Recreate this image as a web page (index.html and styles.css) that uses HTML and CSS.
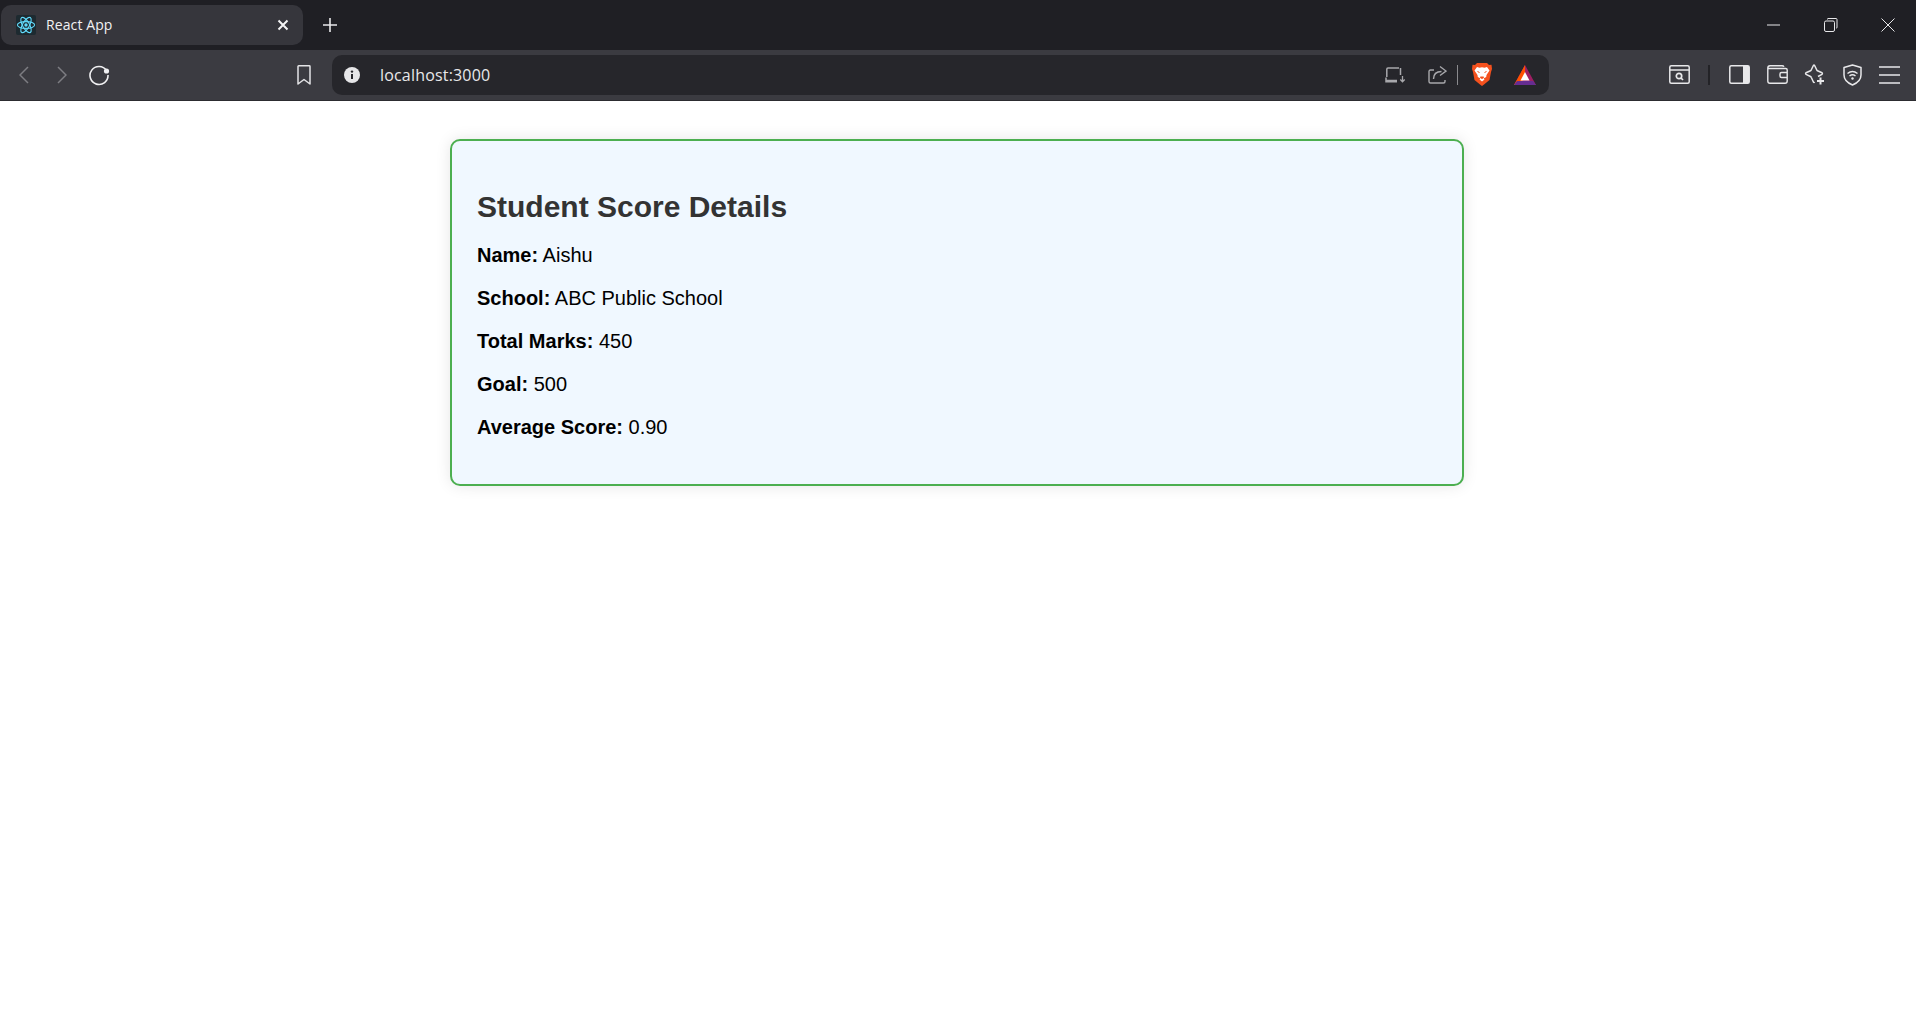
FILE: index.html
```html
<!DOCTYPE html>
<html lang="en">
<head>
<meta charset="utf-8">
<title>React App</title>
<link rel="stylesheet" href="styles.css">
</head>
<body>
<header class="chrome">
  <div class="titlebar">
    <div class="tab">
      <svg class="favicon" viewBox="0 0 20 20"><rect width="20" height="20" rx="2" fill="#1d2a30"/><g fill="none" stroke="#61dafb" stroke-width="1.1"><ellipse cx="10" cy="10" rx="8.6" ry="3.4"/><ellipse cx="10" cy="10" rx="8.6" ry="3.4" transform="rotate(60 10 10)"/><ellipse cx="10" cy="10" rx="8.6" ry="3.4" transform="rotate(120 10 10)"/></g><circle cx="10" cy="10" r="1.7" fill="#61dafb"/></svg>
      <span class="tab-title">React App</span>
      <svg class="tab-close" viewBox="0 0 12 12"><path d="M1.5 1.5l9 9M10.5 1.5l-9 9" stroke="#f4f4f5" stroke-width="2" fill="none"/></svg>
    </div>
    <svg class="new-tab" viewBox="0 0 14 14"><path d="M7 0v14M0 7h14" stroke="#e8e8ea" stroke-width="1.6" fill="none"/></svg>
    <div class="win-controls">
      <svg class="win-icon" viewBox="0 0 14 14"><path d="M0 7h13" stroke="#e8e8ea" stroke-width="1"/></svg>
      <svg class="win-icon" viewBox="0 0 14 14"><path d="M3.5 1.5V1q0-.5.5-.5h8q1 0 1 1v8q0 .5-.5.5H12" stroke="#e8e8ea" fill="none"/><rect x=".5" y="3" width="10" height="10.5" rx="1.5" stroke="#e8e8ea" fill="none"/></svg>
      <svg class="win-icon" viewBox="0 0 14 14"><path d="M.5.5l13 13M13.5.5l-13 13" stroke="#e8e8ea" stroke-width="1" fill="none"/></svg>
    </div>
  </div>
  <div class="toolbar">
    <svg class="ic-back" viewBox="0 0 10 18"><path d="M9 1L1 9l8 8" stroke="#7d7d82" stroke-width="1.5" fill="none"/></svg>
    <svg class="ic-forward" viewBox="0 0 10 18"><path d="M1 1l8 8-8 8" stroke="#7d7d82" stroke-width="1.5" fill="none"/></svg>
    <svg class="ic-reload" viewBox="0 0 22 22"><path d="M18.5 6.5A9 9 0 1 0 20 11" stroke="#f0f0f2" stroke-width="1.6" fill="none"/><circle cx="18.5" cy="7" r="2.6" fill="#f0f0f2"/></svg>
    <svg class="ic-bookmark" viewBox="0 0 16 20"><path d="M2 1.5q0-.7.7-.7h10.600q.7 0 .7.700V19l-6-4.500L2 19z" stroke="#e4e4e6" stroke-width="1.5" fill="none" stroke-linejoin="round"/></svg>
    <div class="address">
      <svg class="ic-info" viewBox="0 0 16 16"><circle cx="8" cy="8" r="8" fill="#e6e6e8"/><path d="M8 7v5" stroke="#25252a" stroke-width="2"/><circle cx="8" cy="4.6" r="1.2" fill="#25252a"/></svg>
      <span class="url">localhost:3000</span>
      <svg class="ic-screen" viewBox="0 0 21 16"><path d="M14 1H3Q1.800 1 1.800 2.200V10M1 13.500h11M1 10.500v4.300h11M15.500 1v7" stroke="#a8a8ac" stroke-width="1.5" fill="none"/><path d="M17.500 9v5.500M15.300 12.500l2.200 2.300 2.200-2.300" stroke="#a8a8ac" stroke-width="1.3" fill="none"/></svg>
      <svg class="ic-share" viewBox="0 0 19 19"><path d="M6 5H2.500Q1 5 1 6.500V16.500Q1 18 2.500 18h13q1.500 0 1.500-1.500V15" stroke="#a8a8ac" stroke-width="1.4" fill="none"/><path d="M5.500 14c0-5 3-7.500 8-7.500M12 1.500l6 4.500-6 4.500" stroke="#a8a8ac" stroke-width="1.4" fill="none"/></svg>
      <span class="addr-sep"></span>
      <svg class="ic-brave" viewBox="0 0 20 23"><path d="M5 0h10l2 2 2.500-.3.500 4.300-1 3-1.500 8L12 21.500 10 23l-2-1.500L2.500 17 1 9 0 6l.5-4.300L3 2z" fill="#f4511e"/><path d="M5 4l2.500.8L10 4.300l2.500.5L15 4l2.500 3.500-3 4.500-.3 2L11.500 15.500l1 1L10 18.500l-2.500-2 1-1-2.700-1.500-.3-2-3-4.500z" fill="#fff"/><path d="M7.500 9.500l-2-1M12.500 9.500l2-1M8.300 14h3.400L10 15.800z" stroke="#f4511e" fill="#f4511e"/></svg>
      <svg class="ic-bat" viewBox="0 0 22 20"><path d="M11 0l11 20H0z" fill="#9e1f63"/><path d="M11 0L0 20h6.500L11 11z" fill="#ff5000"/><path d="M0 20l3-4h16l3 4z" fill="#662d91"/><path d="M11 7l4.500 8.500h-9z" fill="#fff"/></svg>
    </div>
    <svg class="ic-capture" viewBox="0 0 21 19"><rect x=".8" y=".8" width="19.400" height="17.400" rx="1.500" stroke="#e8e8ea" stroke-width="1.5" fill="none"/><path d="M1 5h19" stroke="#e8e8ea" stroke-width="1.5"/><circle cx="10" cy="11" r="2.700" stroke="#e8e8ea" stroke-width="1.700" fill="none"/><path d="M12 13l2 2" stroke="#e8e8ea" stroke-width="1.700"/></svg>
    <span class="tool-sep"></span>
    <svg class="ic-side" viewBox="0 0 21 19"><rect x=".8" y=".8" width="19.400" height="17.400" rx="1.500" stroke="#e8e8ea" stroke-width="1.5" fill="none"/><rect x="14" y="1" width="6" height="17" fill="#e8e8ea"/></svg>
    <svg class="ic-wallet" viewBox="0 0 21 19"><path d="M17 1.800Q16.500.8 15 .8H3Q.8.800.8 3v13q0 2.200 2.200 2.200h15q2.200 0 2.200-2.200V5q0-1.500-1.500-1.500H1.500" stroke="#e8e8ea" stroke-width="1.4" fill="none"/><path d="M20 7.500h-5.500q-1.500 0-1.500 1.500v2q0 1.500 1.500 1.500H20" stroke="#e8e8ea" stroke-width="1.4" fill="none"/></svg>
    <svg class="ic-star" viewBox="0 0 21 21"><path d="M14 12.500L18 10.300Q18.800 9.500 18 8.800L13.500 6.800Q13 6.500 12.800 6L10.600 1.500Q10 .7 9.400 1.500L7.200 6Q7 6.500 6.500 6.800L2 8.800Q1.200 9.500 2 10.300L6.500 12.500Q7 12.800 7.200 13.300L9.400 18Q10 18.800 10.600 18" stroke="#e8e8ea" stroke-width="1.5" fill="none" stroke-linejoin="round"/><path d="M16.500 13.500v7M13 17h7" stroke="#e8e8ea" stroke-width="2" fill="none"/></svg>
    <svg class="ic-shield" viewBox="0 0 19 22"><path d="M9.500 1L18 3.500V11q0 6.500-8.500 10Q1 17.500 1 11V3.500z" stroke="#e8e8ea" stroke-width="1.5" fill="none" stroke-linejoin="round"/><path d="M4.500 9.500q5-4 10 0M6.500 12q3-2.500 6 0" stroke="#e8e8ea" stroke-width="1.4" fill="none"/><circle cx="9.500" cy="14.500" r="1.200" fill="#e8e8ea"/></svg>
    <svg class="ic-menu" viewBox="0 0 21 18"><path d="M0 1h21M0 9h21M0 17h21" stroke="#e8e8ea" stroke-width="1.7"/></svg>
  </div>
</header>
<main class="page">
  <section class="card">
    <h2 class="card-title">Student Score Details</h2>
    <p class="row"><strong>Name:</strong> Aishu</p>
    <p class="row"><strong>School:</strong> ABC Public School</p>
    <p class="row"><strong>Total Marks:</strong> 450</p>
    <p class="row"><strong>Goal:</strong> 500</p>
    <p class="row"><strong>Average Score:</strong> 0.90</p>
  </section>
</main>
</body>
</html>
```

FILE: styles.css
```css
* { box-sizing: border-box; }
html, body { margin: 0; height: 100%; background: #fff; overflow: hidden; }
svg { display: block; flex: none; }

.chrome { font-family: "Open Sans", "Noto Sans", sans-serif; }

.titlebar {
  display: flex;
  align-items: center;
  height: 50px;
  background: #1f1f24;
  padding-left: 1px;
}
.tab {
  display: flex;
  align-items: center;
  width: 302px;
  height: 40px;
  padding: 0 14px 0 15px;
  background: #36363c;
  border-radius: 10px;
}
.favicon { width: 20px; height: 20px; }
.tab-title { margin: 0 0 2px 10px; font-size: 14px; letter-spacing: 0.1px; color: #f1f1f3; }
.tab-close { width: 12px; height: 12px; margin-left: auto; }
.new-tab { width: 14px; height: 14px; margin-left: 20px; }
.win-controls { display: flex; align-items: center; gap: 43px; margin-left: auto; padding-right: 21px; }
.win-icon { width: 14px; height: 14px; }

.toolbar {
  display: flex;
  align-items: center;
  height: 51px;
  padding: 0 0 1px 19px;
  background: #3b3b41;
  border-bottom: 1px solid #2c2c30;
}
.ic-back, .ic-forward { width: 10px; height: 18px; }
.ic-forward { margin-left: 28px; }
.ic-reload { width: 22px; height: 22px; margin-left: 21px; }
.ic-bookmark { width: 16px; height: 20px; margin-left: 186px; }
.address {
  display: flex;
  align-items: center;
  width: 1217px;
  height: 40px;
  margin-left: 20px;
  padding-left: 12px;
  background: #26262b;
  border-radius: 10px;
}
.ic-info { width: 16px; height: 16px; }
.url { margin-left: 20px; font-size: 16px; letter-spacing: 0.18px; color: #e8e8ea; }
.ic-screen { width: 21px; height: 16px; margin-left: auto; }
.ic-share { width: 19px; height: 19px; margin-left: 22px; }
.addr-sep { width: 1px; height: 20px; margin-left: 10px; background: #8a8a8e; }
.ic-brave { width: 20px; height: 23px; margin-left: 14px; }
.ic-bat { width: 22px; height: 20px; margin-left: 22px; margin-right: 13px; }
.ic-capture { width: 21px; height: 19px; margin-left: 120px; }
.tool-sep { width: 2px; height: 20px; margin-left: 18px; background: #232327; }
.ic-side { width: 21px; height: 19px; margin-left: 19px; }
.ic-wallet { width: 21px; height: 19px; margin-left: 17px; }
.ic-star { width: 21px; height: 21px; margin-left: 16px; }
.ic-shield { width: 19px; height: 22px; margin-left: 18px; }
.ic-menu { width: 21px; height: 18px; margin-left: 17px; }

.page { display: flex; justify-content: center; padding: 38px 2px 0 0; }
.card {
  width: 1014px;
  padding: 47px 25px 25px;
  background: #f0f8ff;
  border: 2px solid #4caf50;
  border-radius: 10px;
  box-shadow: 0 0 15px rgba(0, 0, 0, 0.1);
  font-family: "Liberation Sans", Arial, sans-serif;
  color: #000;
}
.card-title {
  margin: 0 0 19px;
  font-size: 30px;
  line-height: 37px;
  font-weight: 700;
  color: #333;
}
.row { margin: 0 0 20px; font-size: 20px; line-height: 23px; }
```
